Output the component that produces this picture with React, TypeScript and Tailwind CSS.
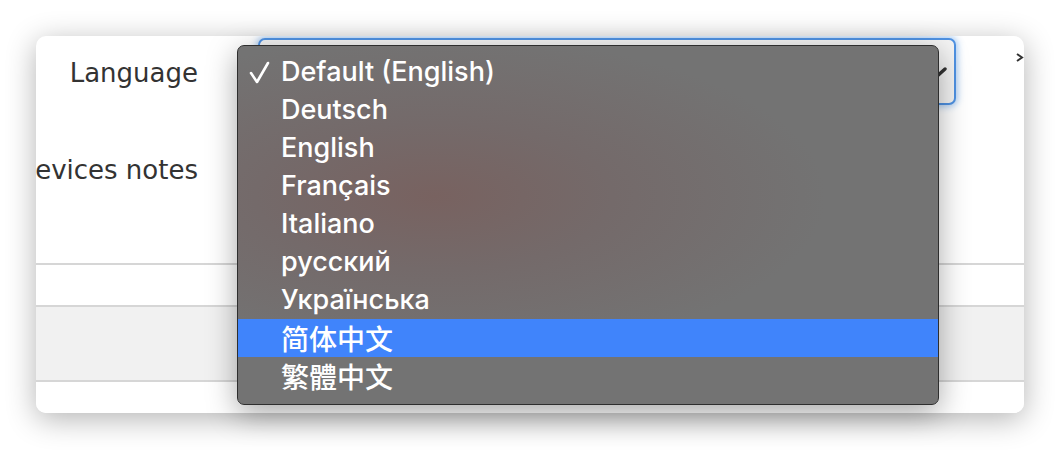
import { useState } from "react";

const languages = [
  "Default (English)",
  "Deutsch",
  "English",
  "Français",
  "Italiano",
  "русский",
  "Українська",
  "简体中文",
  "繁體中文",
];

const App = () => {
  const [selected] = useState<number>(0);
  const [hovered] = useState<number>(7);

  return (
    <div className="relative w-[1060px] h-[450px] bg-white font-['DejaVu_Sans',sans-serif]">
      <div className="absolute left-[36px] top-[36px] w-[988px] h-[377px] bg-white rounded-[10px] overflow-hidden shadow-[0_6px_30px_rgba(0,0,0,0.3)] flex flex-col">
        {/* language row */}
        <div className="flex items-start pt-[2px] h-[69px]">
          <div className="w-[162px] shrink-0 flex justify-end h-[67px] items-center pt-[3px]">
            <span className="whitespace-nowrap text-[26px] text-[#333]">Language</span>
          </div>
          <div className="ml-[60px] w-[699px] h-[67px] rounded-[7px] border-2 border-[#4f92e3] bg-[#f4f4f4] shadow-[0_0_6px_2px_rgba(80,150,230,0.45)] flex items-center justify-end pr-[7px]">
            <svg width="24" height="14" viewBox="0 0 24 14" className="mt-[4px]">
              <path d="M2 2 L12 11 L22 2" fill="none" stroke="#333" strokeWidth="3.4" strokeLinecap="round" strokeLinejoin="round" />
            </svg>
          </div>
          <div className="ml-[60px] pt-[15px]">
            <svg width="8" height="9" viewBox="0 0 8 9">
              <path d="M1 1 L6 4.5 L1 8" fill="none" stroke="#333" strokeWidth="2" />
            </svg>
          </div>
        </div>
        {/* devices notes row */}
        <div className="flex h-[158px]">
          <div className="w-[162px] shrink-0 flex justify-end pt-[46px]">
            <span className="whitespace-nowrap text-[26px] text-[#333]">Devices notes</span>
          </div>
        </div>
        <div className="h-[42px] border-t-2 border-[#d6d6d6]"></div>
        <div className="h-[77px] border-t-2 border-b-2 border-[#d6d6d6] bg-[#f1f1f1]"></div>
        <div className="flex-1 bg-white"></div>
      </div>

      {/* open dropdown menu */}
      <div className="absolute left-[237px] top-[45px] w-[702px] h-[360px] rounded-[7px] border border-[#2e2e2e] bg-[radial-gradient(ellipse_at_28%_42%,#786260_0%,#746a6a_25%,#737373_55%)] shadow-[0_8px_30px_rgba(0,0,0,0.35)] pt-[7px] overflow-hidden font-['Inter','Noto_Sans_CJK_SC',sans-serif]">
        {languages.map((lang, i) => (
          <div
            key={lang}
            className={`relative h-[38px] flex items-center pl-[43px] text-[27px] font-medium text-white ${i === hovered ? "bg-[#4084fb]" : ""}`}
          >
            {i === selected && (
              <svg width="22" height="24" viewBox="0 0 22 24" className="absolute left-[11px] top-[8px]">
                <path d="M2 12 L8 21 L19 2" fill="none" stroke="white" strokeWidth="2.6" strokeLinecap="round" strokeLinejoin="round" />
              </svg>
            )}
            <span className={lang.match(/[\u4e00-\u9fff]/) ? "font-['Noto_Sans_CJK_SC',sans-serif] font-medium text-[28px]" : ""}>{lang}</span>
          </div>
        ))}
      </div>
    </div>
  );
};

export default App;
